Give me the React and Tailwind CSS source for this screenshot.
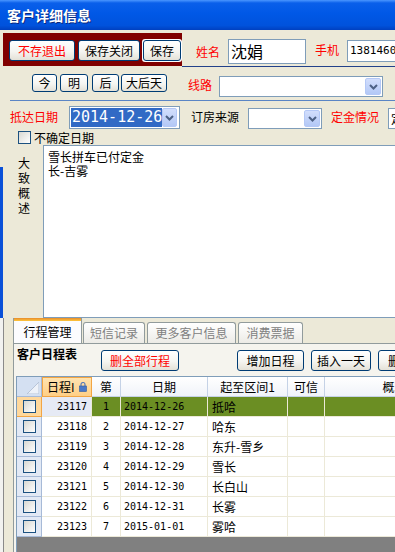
import React from 'react';

const F = "font-['Noto_Sans_CJK_SC','Noto_Sans',sans-serif]";
const MONO = "font-['DejaVu_Sans_Mono',monospace]";

const rows = [
  [23117, 1, '2014-12-26', '抵哈'],
  [23118, 2, '2014-12-27', '哈东'],
  [23119, 3, '2014-12-28', '东升-雪乡'],
  [23120, 4, '2014-12-29', '雪长'],
  [23121, 5, '2014-12-30', '长白山'],
  [23122, 6, '2014-12-31', '长雾'],
  [23123, 7, '2015-01-01', '雾哈'],
];

function Btn({ children, className = '' }) {
  return (
    <div
      className={`shrink-0 rounded-[3px] border border-[#003C74] bg-[linear-gradient(to_bottom,#ffffff_0%,#f5f5f1_55%,#e4e1d7_100%)] text-[12px] leading-none flex items-center justify-center ${className}`}
    >
      {children}
    </div>
  );
}

function DropBtn({ className = '' }) {
  return (
    <div
      className={`shrink-0 rounded-[2px] border border-[#B4C8F6] bg-[linear-gradient(to_bottom,#d2defc,#b3c8f6)] flex items-center justify-center ${className}`}
    >
      <svg width="9" height="6" viewBox="0 0 9 6">
        <path d="M1 1 L4.5 4.5 L8 1" stroke="#4D6185" strokeWidth="2" fill="none" />
      </svg>
    </div>
  );
}

function CheckBox({ className = '' }) {
  return (
    <div
      className={`shrink-0 w-[13px] h-[13px] border border-[#1C5180] bg-[linear-gradient(135deg,#d8d8d2,#ffffff)] ${className}`}
    />
  );
}

export default function App() {
  return (
    <div className={`w-[395px] h-[552px] overflow-hidden bg-[#ECE9D8] flex flex-col text-black ${F}`}>
      {/* Title bar */}
      <div className="h-[30px] shrink-0 bg-[linear-gradient(to_bottom,#4a96ff_0%,#0a5fea_10%,#0058e6_45%,#0052dc_85%,#0040c0_100%)] flex items-center pl-[7px]">
        <span className="text-white text-[14px] font-bold leading-none [text-shadow:1px_1px_0_#0a2a80]">客户详细信息</span>
      </div>

      {/* Row 1 */}
      <div className="h-[37px] shrink-0 flex">
        <div className="mt-[3px] ml-[3px] w-[187px] h-[33px] bg-[#800000] flex items-start pt-[7px] pl-[6px]">
          <Btn className="w-[66px] h-[21px] text-[#FF0000]">不存退出</Btn>
          <Btn className="ml-[3px] w-[62px] h-[21px]">保存关闭</Btn>
          <div className="ml-[2px] bg-white p-[1px] rounded-[3px] -mt-[1px]">
            <Btn className="w-[38px] h-[21px]">保存</Btn>
          </div>
        </div>
        <div className="flex-1 border-b border-[#22418A] flex items-start">
          <span className="ml-[14px] mt-[15px] w-[32px] text-[12px] leading-[14px] text-[#FF0000]">姓名</span>
          <div className="mt-[9px] w-[78px] h-[25px] shrink-0 border border-[#7F9DB9] bg-white text-[16px] leading-[23px] pl-[2px]">沈娟</div>
          <span className="ml-[9px] mt-[13px] w-[32px] shrink-0 text-[12px] leading-[14px] text-[#FF0000]">手机</span>
          <div className={`mt-[10px] w-[60px] h-[22px] shrink-0 border border-[#7F9DB9] bg-white text-[11px] leading-[20px] pl-[2px] whitespace-nowrap overflow-hidden ${MONO}`}>13814604</div>
        </div>
      </div>

      {/* Row 2 */}
      <div className="ml-[10px] h-[34px] shrink-0 border-b border-[#5A85C5] flex items-start">
        <Btn className="ml-[22px] mt-[7px] w-[25px] h-[18px]">今</Btn>
        <Btn className="ml-[3px] mt-[7px] w-[28px] h-[18px]">明</Btn>
        <Btn className="ml-[4px] mt-[7px] w-[27px] h-[18px]">后</Btn>
        <Btn className="ml-[2px] mt-[7px] w-[46px] h-[18px]">大后天</Btn>
        <span className="ml-[21px] mt-[11px] w-[31px] shrink-0 text-[12px] leading-[14px] text-[#FF0000]">线路</span>
        <div className="mt-[9px] w-[164px] h-[21px] shrink-0 border border-[#7F9DB9] bg-white flex items-center justify-end pr-[1px]">
          <DropBtn className="w-[16px] h-[17px]" />
        </div>
      </div>

      {/* Row 3 */}
      <div className="h-[29px] shrink-0 flex items-start">
        <span className="ml-[10px] mt-[9px] w-[59px] shrink-0 text-[12px] leading-[14px] text-[#FF0000]">抵达日期</span>
        <div className="mt-[5px] w-[111px] h-[23px] shrink-0 border border-[#7F9DB9] bg-white flex items-center pl-[1px] pr-[2px]">
          <div className={`w-[91px] h-[19px] bg-[#316AC5] text-white text-[15px] leading-[19px] pl-[1px] whitespace-nowrap ${MONO}`}>2014-12-26</div>
          <div className="flex-1" />
          <DropBtn className="w-[15px] h-[19px]" />
        </div>
        <span className="ml-[11px] mt-[9px] w-[57px] shrink-0 text-[12px] leading-[14px]">订房来源</span>
        <div className="mt-[7px] w-[74px] h-[21px] shrink-0 border border-[#7F9DB9] bg-white flex items-center justify-end pr-[1px]">
          <DropBtn className="w-[16px] h-[17px]" />
        </div>
        <span className="ml-[9px] mt-[9px] w-[57px] shrink-0 text-[12px] leading-[14px] text-[#FF0000]">定金情况</span>
        <div className="mt-[7px] w-[40px] h-[21px] shrink-0 border border-[#7F9DB9] bg-white text-[12px] leading-[19px] pl-[2px] whitespace-nowrap overflow-hidden">定金</div>
      </div>

      {/* Row 4 */}
      <div className="h-[15px] shrink-0 flex items-start">
        <CheckBox className="ml-[18px] mt-[1px]" />
        <span className="ml-[3px] text-[12px] leading-[15px]">不确定日期</span>
      </div>

      {/* Description */}
      <div className="h-[173px] shrink-0 flex">
        <div className="w-[43px] shrink-0 flex">
          <div className="w-[3px] flex flex-col">
            <div className="h-[22px]" />
            <div className="flex-1 bg-[#0A50D8]" />
          </div>
          <div className="ml-[14px] mt-[10px] w-[14px] flex flex-col items-center text-[12px] leading-[15px]">
            <span>大</span>
            <span>致</span>
            <span>概</span>
            <span>述</span>
          </div>
        </div>
        <div className="flex-1 border-l border-t border-b border-[#7F9DB9] bg-white pl-[4px] pt-[4px] text-[12px] leading-[14px]">
          <div>雪长拼车已付定金</div>
          <div>长-吉雾</div>
        </div>
      </div>

      {/* Bottom tab area */}
      <div className="flex-1 flex">
        <div className="w-[13px] shrink-0 flex">
          <div className="w-[3px] bg-[#F2F2F0]" />
          <div className="w-[1px] bg-[#8A8A8A]" />
          <div className="flex-1" />
        </div>
        <div className="flex-1 flex flex-col">
          {/* Tabs */}
          <div className="h-[25px] shrink-0 flex items-end">
            <div className="w-[69px] h-[25px] shrink-0 border-x border-[#919B9C] bg-[#FCFCFE] flex flex-col">
              <div className="h-[3px] bg-[linear-gradient(to_bottom,#E68B2C,#FFC73C)]" />
              <div className="flex-1 flex items-center justify-center text-[12px] leading-none">行程管理</div>
            </div>
            <div className="ml-[1px] w-[62px] h-[21px] shrink-0 border border-b-0 border-[#919B9C] rounded-t-[3px] bg-[linear-gradient(to_bottom,#ffffff,#ecebe6)] flex items-center justify-center text-[12px] leading-none text-[#808080]">短信记录</div>
            <div className="ml-[2px] w-[89px] h-[21px] shrink-0 border border-b-0 border-[#919B9C] rounded-t-[3px] bg-[linear-gradient(to_bottom,#ffffff,#ecebe6)] flex items-center justify-center text-[12px] leading-none text-[#808080]">更多客户信息</div>
            <div className="ml-[2px] w-[65px] h-[21px] shrink-0 border border-b-0 border-[#919B9C] rounded-t-[3px] bg-[linear-gradient(to_bottom,#ffffff,#ecebe6)] flex items-center justify-center text-[12px] leading-none text-[#808080]">消费票据</div>
          </div>

          {/* Tab page */}
          <div className="flex-1 border-l border-t border-[#919B9C] bg-[#F5F4EE] flex flex-col">
            <div className="h-[32px] shrink-0 flex items-start">
              <span className="ml-[3px] mt-[3px] w-[84px] shrink-0 text-[12px] leading-[14px] font-bold">客户日程表</span>
              <Btn className="mt-[6px] w-[78px] h-[21px] text-[#FF0000]">删全部行程</Btn>
              <Btn className="ml-[58px] mt-[6px] w-[67px] h-[21px]">增加日程</Btn>
              <Btn className="ml-[7px] mt-[6px] w-[60px] h-[21px]">插入一天</Btn>
              <Btn className="ml-[7px] mt-[6px] w-[60px] h-[21px] justify-start pl-[9px]">删除</Btn>
            </div>

            {/* Grid */}
            <div className="ml-[2px] flex-1 border-l border-t border-[#7F9DB9] bg-[#808080] flex flex-col overflow-hidden">
              {/* Header */}
              <div className="h-[20px] shrink-0 flex text-[12px]">
                <div className="w-[25px] shrink-0 bg-[#D4E0F2] border-r border-b border-[#A7BAD7] flex items-end justify-end pr-[2px] pb-[2px]">
                  <svg width="12" height="12" viewBox="0 0 12 12">
                    <path d="M12 0 L12 12 L0 12 Z" fill="#EEF2F9" stroke="#B7C4D8" strokeWidth="1" />
                  </svg>
                </div>
                <div className="w-[50px] shrink-0 bg-[linear-gradient(to_bottom,#FFE3B0,#FFCF86)] border border-[#F2A544] flex items-center pl-[4px]">
                  <span className="leading-none">日程I</span>
                  <svg className="ml-[4px]" width="8" height="10" viewBox="0 0 8 10">
                    <path d="M2 4 V2.5 a2 2 0 0 1 4 0 V4" stroke="#5B7DB8" strokeWidth="1.2" fill="none" />
                    <rect x="0.5" y="4" width="7" height="5.5" fill="#4A78C8" stroke="#2F5A9E" strokeWidth="0.6" />
                  </svg>
                </div>
                <div className="w-[29px] shrink-0 bg-[linear-gradient(to_bottom,#ffffff,#f0f3f9)] border-r border-b border-[#C5D2E6] flex items-center justify-center leading-none">第</div>
                <div className="w-[87px] shrink-0 bg-[linear-gradient(to_bottom,#ffffff,#f0f3f9)] border-r border-b border-[#C5D2E6] flex items-center justify-center leading-none">日期</div>
                <div className="w-[80px] shrink-0 bg-[linear-gradient(to_bottom,#ffffff,#f0f3f9)] border-r border-b border-[#C5D2E6] flex items-center justify-center leading-none">起至区间1</div>
                <div className="w-[37px] shrink-0 bg-[linear-gradient(to_bottom,#ffffff,#f0f3f9)] border-r border-b border-[#C5D2E6] flex items-center justify-center leading-none">可信</div>
                <div className="w-[140px] shrink-0 bg-[linear-gradient(to_bottom,#ffffff,#f0f3f9)] border-r border-b border-[#C5D2E6] flex items-center justify-center leading-none">概况</div>
              </div>

              {/* Rows */}
              {rows.map(([id, n, date, route], i) => {
                const sel = i === 0;
                return (
                  <div key={id} className="h-[20px] shrink-0 flex text-[12px]">
                    <div
                      className={`w-[25px] shrink-0 border-r border-b flex items-center justify-center ${
                        sel ? 'bg-[#FFD89C] border-[#F2A544]' : 'bg-[#E2E9F5] border-[#A7BAD7]'
                      }`}
                    >
                      <CheckBox />
                    </div>
                    <div
                      className={`w-[50px] shrink-0 border-r border-b border-[#ECE9D8] flex items-center justify-end pr-[4px] ${MONO} text-[10px] ${
                        sel ? 'bg-[#E6EAF5]' : 'bg-white'
                      }`}
                    >
                      {id}
                    </div>
                    <div className={`w-[29px] shrink-0 border-r border-b border-[#ECE9D8] flex items-center justify-center ${MONO} text-[10px] ${sel ? 'bg-[#6B8E23]' : 'bg-white'}`}>
                      {n}
                    </div>
                    <div className={`w-[87px] shrink-0 border-r border-b border-[#ECE9D8] flex items-center pl-[3px] ${MONO} text-[10px] ${sel ? 'bg-[#6B8E23]' : 'bg-white'}`}>
                      {date}
                    </div>
                    <div className={`w-[80px] shrink-0 border-r border-b border-[#ECE9D8] flex items-center pl-[4px] leading-none ${sel ? 'bg-[#6B8E23]' : 'bg-white'}`}>
                      {route}
                    </div>
                    <div className={`w-[37px] shrink-0 border-r border-b border-[#ECE9D8] ${sel ? 'bg-[#6B8E23]' : 'bg-white'}`} />
                    <div className={`w-[140px] shrink-0 border-r border-b border-[#ECE9D8] ${sel ? 'bg-[#6B8E23]' : 'bg-white'}`} />
                  </div>
                );
              })}
            </div>
          </div>
        </div>
      </div>
    </div>
  );
}
